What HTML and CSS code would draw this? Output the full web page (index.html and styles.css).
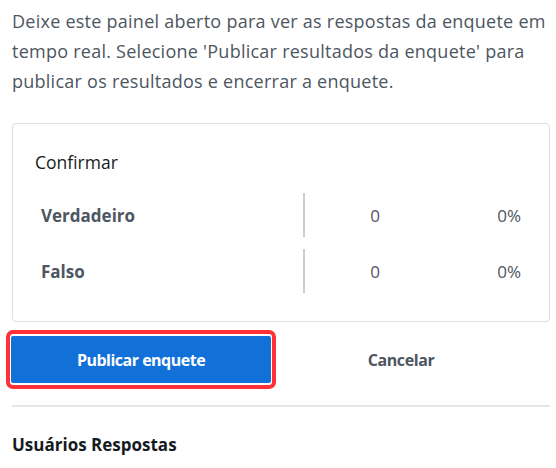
FILE: index.html
```html
<!DOCTYPE html>
<html lang="pt">
<head>
    <meta charset="UTF-8">
    <title>Enquete</title>
    <link rel="stylesheet" href="styles.css">
</head>
<body>
    <div class="panel">
        <p class="intro">Deixe este painel aberto para ver as respostas da enquete em tempo real. Selecione 'Publicar resultados da enquete' para publicar os resultados e encerrar a enquete.</p>

        <div class="poll-card">
            <h2 class="poll-title">Confirmar</h2>
            <div class="poll-row">
                <span class="option">Verdadeiro</span>
                <span class="divider"></span>
                <span class="count">0</span>
                <span class="percent">0%</span>
            </div>
            <div class="poll-row">
                <span class="option">Falso</span>
                <span class="divider"></span>
                <span class="count">0</span>
                <span class="percent">0%</span>
            </div>
        </div>

        <div class="actions">
            <div class="focus-ring">
                <button class="btn-primary">Publicar enquete</button>
            </div>
            <button class="btn-link">Cancelar</button>
        </div>

        <h3 class="section-title">Usuários Respostas</h3>
    </div>
</body>
</html>
```

FILE: styles.css
```css
body {
    margin: 0;
    background: #fff;
    font-family: "Open Sans", "Noto Sans", sans-serif;
}

.panel {
    padding: 6px 6px 0 12px;
}

.intro {
    margin: 0;
    font-size: 18px;
    letter-spacing: 0.25px;
    line-height: 30px;
    color: #4d5661;
}

.poll-card {
    margin-top: 27px;
    border: 1px solid #d9dee4;
    border-radius: 4px;
    padding: 26px 28px 28px 22px;
}

.poll-title {
    margin: 0 0 19px;
    font-size: 17.5px;
    font-weight: 400;
    color: #161b22;
}

.poll-row {
    display: flex;
    align-items: center;
    height: 44px;
    margin-bottom: 12px;
    font-size: 17px;
    color: #4d5661;
}

.poll-row:last-child {
    margin-bottom: 0;
}

.option {
    width: 262px;
    padding-left: 6px;
    font-weight: 700;
}

.divider {
    width: 2px;
    height: 44px;
    background: #c8ced6;
}

.count {
    width: 140px;
    text-align: center;
}

.percent {
    flex: 1;
    text-align: right;
}

.actions {
    display: flex;
    align-items: center;
    margin: 8px 0 0 -6px;
}

.focus-ring {
    border: 4px solid #ff3036;
    border-radius: 7px;
    padding: 2px 1px;
}

.btn-primary {
    display: block;
    width: 260px;
    height: 47px;
    border: 0;
    border-radius: 2px;
    background: #1271d9;
    color: #fff;
    font-family: inherit;
    font-size: 16px;
    font-weight: 700;
    letter-spacing: -0.5px;
}

.btn-link {
    width: 250px;
    border: 0;
    background: none;
    color: #4d5661;
    font-family: inherit;
    font-size: 16px;
    font-weight: 700;
    letter-spacing: -0.4px;
}

.section-title {
    margin: 16px 0 0;
    padding-top: 26px;
    border-top: 2px solid #e3e6ea;
    font-size: 17px;
    font-weight: 700;
    color: #161b22;
}
```
